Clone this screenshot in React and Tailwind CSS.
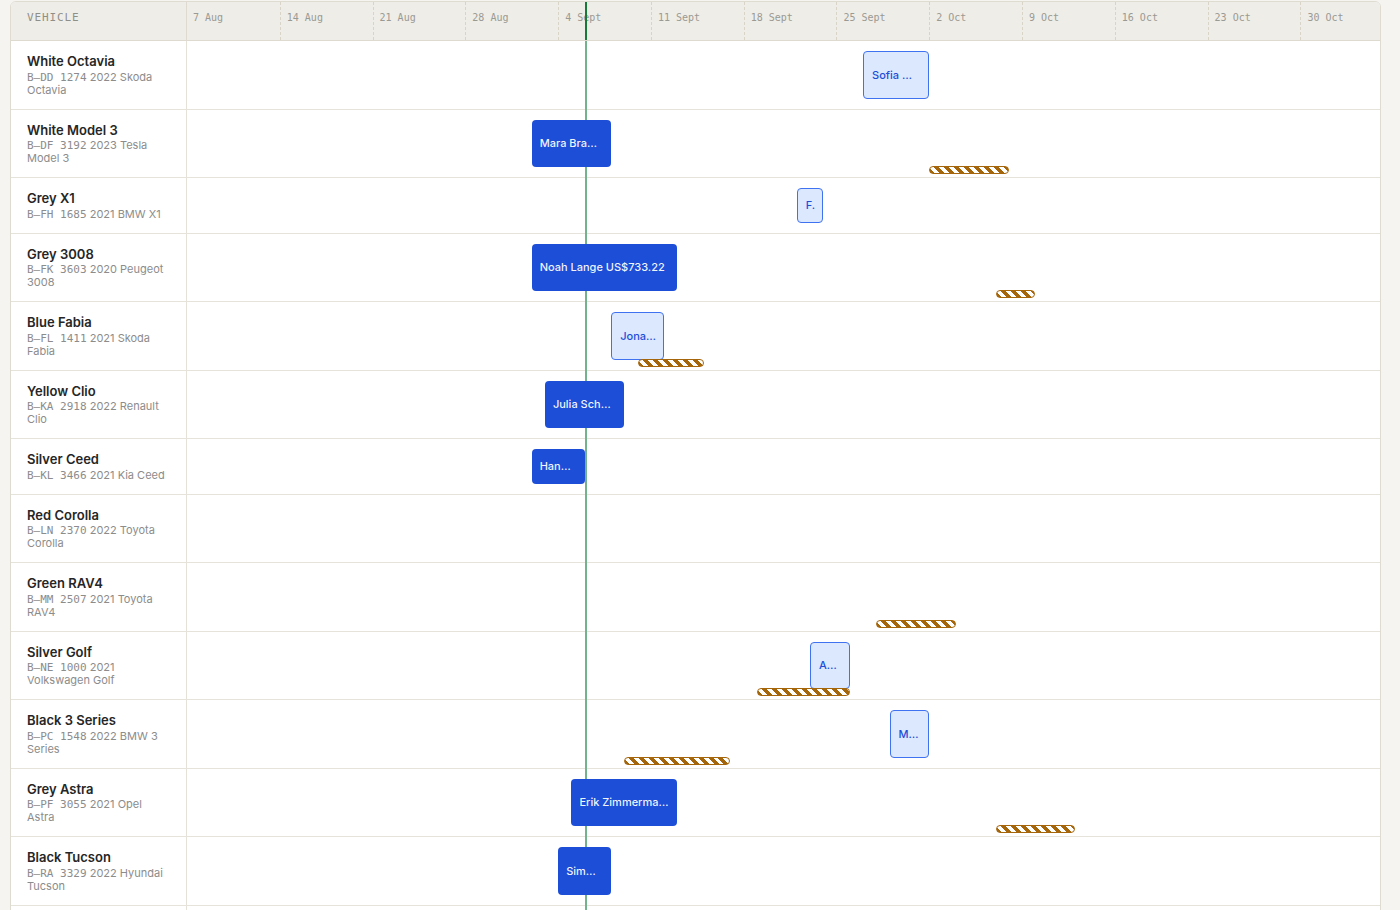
const DAYS = 90;
const TIMELINE_W = 1193;
const DAY_W = TIMELINE_W / DAYS;
const TODAY = 30.1;

const weeks = [
  "7 Aug", "14 Aug", "21 Aug", "28 Aug", "4 Sept", "11 Sept", "18 Sept",
  "25 Sept", "2 Oct", "9 Oct", "16 Oct", "23 Oct", "30 Oct",
];

// bookings: [startDay, days, label, kind]  kind: "dark" | "light"
// holds (striped): [startDay, days]
const vehicles = [
  { name: "White Octavia", plate: "B–DD  1274", lines: ["2022 Skoda", "Octavia"], bookings: [[51, 5, "Sofia …", "light"]], holds: [] },
  { name: "White Model 3", plate: "B–DF  3192", lines: ["2023 Tesla", "Model 3"], bookings: [[26, 6, "Mara Bra…", "dark"]], holds: [[56, 6]] },
  { name: "Grey X1", plate: "B–FH  1685", lines: ["2021 BMW X1"], bookings: [[46, 2, "F.", "light"]], holds: [] },
  { name: "Grey 3008", plate: "B–FK  3603", lines: ["2020 Peugeot", "3008"], bookings: [[26, 11, "Noah Lange US$733.22", "dark"]], holds: [[61, 3]] },
  { name: "Blue Fabia", plate: "B–FL  1411", lines: ["2021 Skoda", "Fabia"], bookings: [[32, 4, "Jona…", "light"]], holds: [[34, 5]] },
  { name: "Yellow Clio", plate: "B–KA  2918", lines: ["2022 Renault", "Clio"], bookings: [[27, 6, "Julia Sch…", "dark"]], holds: [] },
  { name: "Silver Ceed", plate: "B–KL  3466", lines: ["2021 Kia Ceed"], bookings: [[26, 4, "Han…", "dark"]], holds: [] },
  { name: "Red Corolla", plate: "B–LN  2370", lines: ["2022 Toyota", "Corolla"], bookings: [], holds: [] },
  { name: "Green RAV4", plate: "B–MM  2507", lines: ["2021 Toyota", "RAV4"], bookings: [], holds: [[52, 6]] },
  { name: "Silver Golf", plate: "B–NE  1000", lines: ["2021", "Volkswagen Golf"], bookings: [[47, 3, "A…", "light"]], holds: [[43, 7]] },
  { name: "Black 3 Series", plate: "B–PC  1548", lines: ["2022 BMW 3", "Series"], bookings: [[53, 3, "M…", "light"]], holds: [[33, 8]] },
  { name: "Grey Astra", plate: "B–PF  3055", lines: ["2021 Opel", "Astra"], bookings: [[29, 8, "Erik Zimmerma…", "dark"]], holds: [[61, 6]] },
  { name: "Black Tucson", plate: "B–RA  3329", lines: ["2022 Hyundai", "Tucson"], bookings: [[28, 4, "Sim…", "dark"]], holds: [] },
];

const sans = "font-['Inter','Noto_Sans',sans-serif]";
const mono = "font-['DejaVu_Sans_Mono','Liberation_Mono',monospace]";

function Booking({ b }) {
  const [start, days, label, kind] = b;
  const dark = kind === "dark";
  return (
    <div
      className={`absolute top-2.5 bottom-2.5 z-10 flex items-center overflow-hidden whitespace-nowrap rounded px-2 text-[11px] font-medium ${
        dark
          ? "bg-[#1d4ed8] text-white/95"
          : "border border-[#3f72f0] bg-[#dce8fe] text-[#1d4ed8]"
      }`}
      style={{ left: start * DAY_W, width: days * DAY_W }}
    >
      {label}
    </div>
  );
}

function Hold({ h }) {
  const [start, days] = h;
  return (
    <div
      className="absolute bottom-[3px] z-20 h-2 rounded-full border border-[#a5650b] bg-[repeating-linear-gradient(45deg,#a5650b_0_3.5px,#ffffff_3.5px_7px)]"
      style={{ left: start * DAY_W, width: days * DAY_W }}
    />
  );
}

function TodayLine() {
  return (
    <div
      className="absolute top-0 bottom-[-1px] w-[2px] bg-[#72b28d]"
      style={{ left: TODAY * DAY_W - 1 }}
    />
  );
}

function Row({ v }) {
  return (
    <div className="flex border-b border-[#e6e3da]">
      <div className="w-[176px] shrink-0 border-r border-[#e4e1d6] px-4 py-3">
        <div className="text-[13px] font-semibold leading-[17.5px] text-[#262626]">
          {v.name}
        </div>
        <div className="text-[11px] leading-[13px] text-[#8c8c8c]">
          <span className={mono}>{v.plate}</span> {v.lines[0]}
        </div>
        {v.lines[1] && (
          <div className="text-[11px] leading-[13px] text-[#8c8c8c]">
            {v.lines[1]}
          </div>
        )}
      </div>
      <div className="relative flex-1">
        <TodayLine />
        {v.bookings.map((b, i) => (
          <Booking key={i} b={b} />
        ))}
        {v.holds.map((h, i) => (
          <Hold key={i} h={h} />
        ))}
      </div>
    </div>
  );
}

export default function App() {
  return (
    <div className={`min-h-screen bg-[#f5f4f0] pt-px ${sans}`}>
      <div className="ml-[10px] w-[1371px] overflow-hidden rounded-t-md border border-[#dedbd1] bg-white">
        <div className="flex h-[39px] border-b border-[#dedad0] bg-[#efede7]">
          <div
            className={`w-[176px] shrink-0 border-r border-[#dedad0] px-4 pt-[8px] text-[11px] tracking-[0.08em] text-[#8f8f8a] ${mono}`}
          >
            VEHICLE
          </div>
          <div className="relative flex flex-1 overflow-hidden">
            {weeks.map((w, i) => (
              <div
                key={w}
                className={`shrink-0 pl-[6px] pt-[8px] text-[10px] text-[#9a9a94] ${mono} ${
                  i > 0 ? "border-l border-dashed border-[#d8d4c8]" : ""
                }`}
                style={{ width: 7 * DAY_W }}
              >
                {w}
              </div>
            ))}
            <div
              className="absolute top-0 bottom-0 w-[2px] bg-[#157a3a]"
              style={{ left: TODAY * DAY_W - 1 }}
            />
          </div>
        </div>
        {vehicles.map((v) => (
          <Row key={v.name} v={v} />
        ))}
        <div className="flex h-[40px]">
          <div className="w-[176px] shrink-0 border-r border-[#e4e1d6]" />
          <div className="relative flex-1">
            <TodayLine />
          </div>
        </div>
      </div>
    </div>
  );
}
